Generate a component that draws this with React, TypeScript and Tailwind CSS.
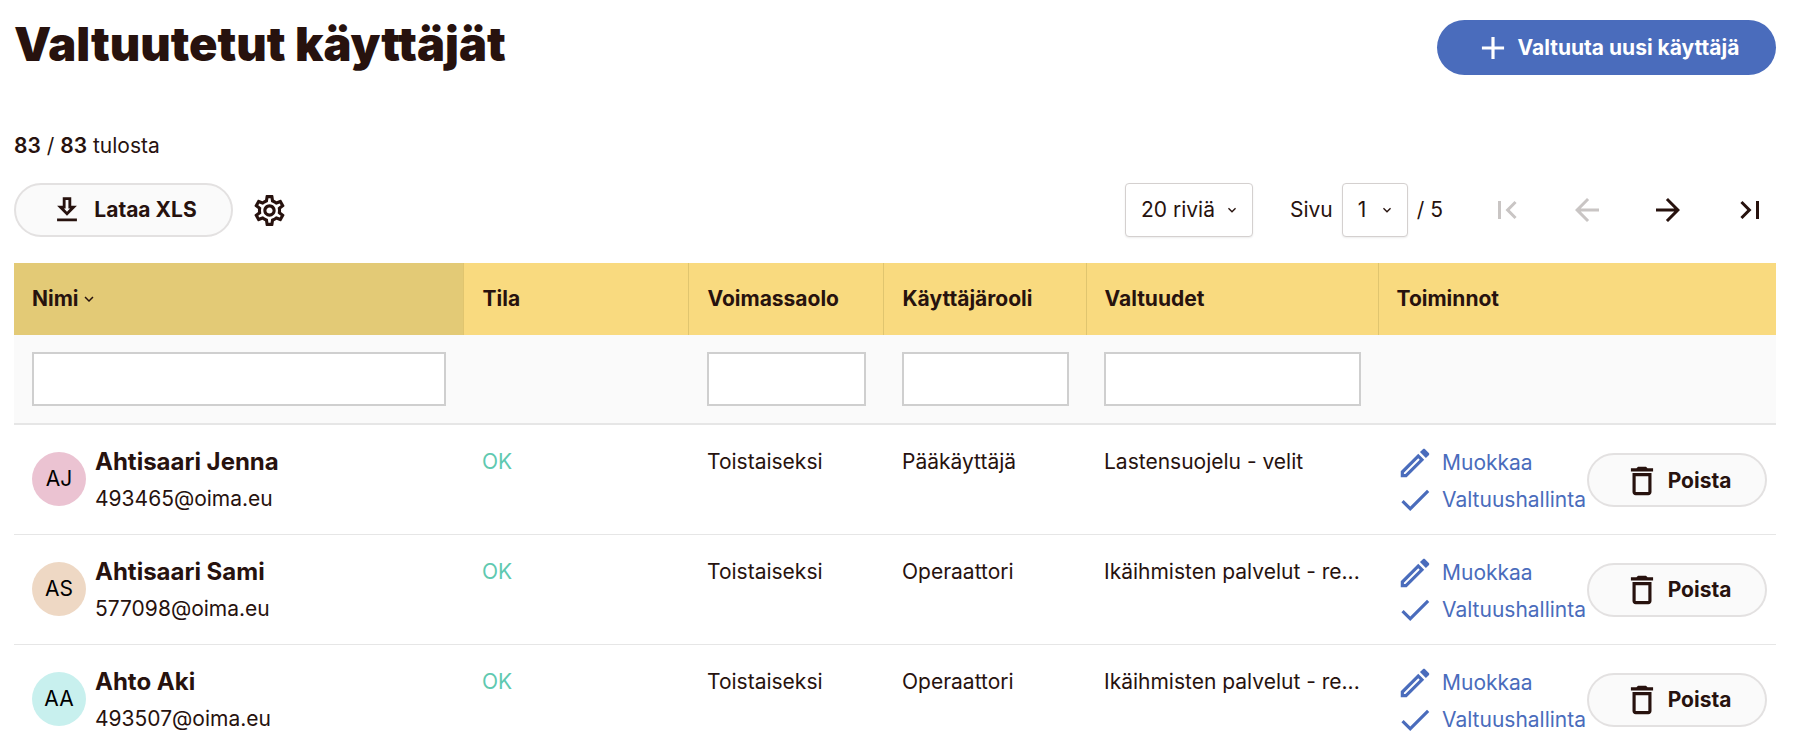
// App.tsx
import React from 'react';

const paths = {
  add: 'M19 13h-6v6h-2v-6H5v-2h6V5h2v6h6v2z',
  download: 'M19 9h-4V3H9v6H5l7 7 7-7zm-8 2V5h2v6h1.17L12 13.17 9.83 11H11zm-6 7h14v2H5z',
  settings:
    'M19.43 12.98c.04-.32.07-.64.07-.98 0-.34-.03-.66-.07-.98l2.11-1.65c.19-.15.24-.42.12-.64l-2-3.46c-.09-.16-.26-.25-.44-.25-.06 0-.12.01-.17.03l-2.49 1c-.52-.4-1.08-.73-1.69-.98l-.38-2.65C14.46 2.18 14.25 2 14 2h-4c-.25 0-.46.18-.49.42l-.38 2.65c-.61.25-1.17.59-1.69.98l-2.49-1c-.06-.02-.12-.03-.18-.03-.17 0-.34.09-.43.25l-2 3.46c-.13.22-.07.49.12.64l2.11 1.65c-.04.32-.07.65-.07.98 0 .33.03.66.07.98l-2.11 1.65c-.19.15-.24.42-.12.64l2 3.46c.09.16.26.25.44.25.06 0 .12-.01.17-.03l2.49-1c.52.4 1.08.73 1.69.98l.38 2.65c.03.24.24.42.49.42h4c.25 0 .46-.18.49-.42l.38-2.65c.61-.25 1.17-.59 1.69-.98l2.49 1c.06.02.12.03.18.03.17 0 .34-.09.43-.25l2-3.46c.12-.22.07-.49-.12-.64l-2.11-1.65zm-1.98-1.71c.04.31.05.52.05.73 0 .21-.02.43-.05.73l-.14 1.13.89.7 1.08.84-.7 1.21-1.27-.51-1.04-.42-.9.68c-.43.32-.84.56-1.25.73l-1.06.43-.16 1.13-.2 1.35h-1.4l-.19-1.35-.16-1.13-1.06-.43c-.43-.18-.83-.41-1.23-.71l-.91-.7-1.06.43-1.27.51-.7-1.21 1.08-.84.89-.7-.14-1.13c-.03-.31-.05-.54-.05-.74s.02-.43.05-.73l.14-1.13-.89-.7-1.08-.84.7-1.21 1.27.51 1.04.42.9-.68c.43-.32.84-.56 1.25-.73l1.06-.43.16-1.13.2-1.35h1.39l.19 1.35.16 1.13 1.06.43c.43.18.83.41 1.23.71l.91.7 1.06-.43 1.27-.51.7 1.21-1.07.85-.89.7.14 1.13zM12 8c-2.21 0-4 1.79-4 4s1.79 4 4 4 4-1.79 4-4-1.79-4-4-4zm0 6c-1.1 0-2-.9-2-2s.9-2 2-2 2 .9 2 2-.9 2-2 2z',
  first: 'M18.41 16.59L13.82 12l4.59-4.59L17 6l-6 6 6 6zM6 6h2v12H6z',
  back: 'M20 11H7.83l5.59-5.59L12 4l-8 8 8 8 1.41-1.41L7.83 13H20v-2z',
  forward: 'M12 4l-1.41 1.41L16.17 11H4v2h12.17l-5.58 5.59L12 20l8-8z',
  last: 'M5.59 7.41L10.18 12l-4.59 4.59L7 18l6-6-6-6zM16 6h2v12h-2z',
  edit: 'M3 17.25V21h3.75L17.81 9.94l-3.75-3.75L3 17.25zM5.92 19H5v-.92l9.06-9.06.92.92L5.92 19zM20.71 7.04c.39-.39.39-1.02 0-1.41l-2.34-2.34c-.2-.2-.45-.29-.71-.29s-.51.08-.7.29l-1.83 1.83 3.75 3.75 1.83-1.83z',
  check: 'M9 16.17 4.83 12l-1.42 1.41L9 19 21 7l-1.41-1.41z',
  trash: 'M16 9v10H8V9h8m-1.5-6h-5l-1 1H5v2h14V4h-3.5l-1-1zM18 7H6v12c0 1.1.9 2 2 2h8c1.1 0 2-.9 2-2V7z',
  chevron: 'M7.41 8.59 12 13.17l4.59-4.58L18 10l-6 6-6-6z',
};

const Icon = ({ d, className }: { d: string; className: string }) => (
  <svg viewBox="0 0 24 24" fill="currentColor" className={className}>
    <path d={d} />
  </svg>
);

const users = [
  { initials: 'AJ', color: 'bg-[#ebc3d2]', name: 'Ahtisaari Jenna', email: '493465@oima.eu', role: 'Pääkäyttäjä', rights: 'Lastensuojelu - velit' },
  { initials: 'AS', color: 'bg-[#eed8c4]', name: 'Ahtisaari Sami', email: '577098@oima.eu', role: 'Operaattori', rights: 'Ikäihmisten palvelut - re...' },
  { initials: 'AA', color: 'bg-[#c8f0ee]', name: 'Ahto Aki', email: '493507@oima.eu', role: 'Operaattori', rights: 'Ikäihmisten palvelut - re...' },
];

const headCell = 'border-l border-[#e0c56f] pl-[19px] pr-[17px] text-left font-bold';
const headCellTight = 'border-l border-[#e0c56f] pl-[18px] pr-[17px] text-left font-bold';
const filterInput = 'block h-[54px] w-full border-2 border-[#cfcfcf] bg-white';

const PageSelect = ({ label, className }: { label: string; className: string }) => (
  <div className={`flex h-[54px] items-center justify-between rounded border border-[#d4d0cf] bg-white pl-[15px] pr-3 shadow-[0_1px_2px_rgba(0,0,0,0.08)] ${className}`}>
    <span>{label}</span>
    <Icon d={paths.chevron} className="h-4 w-4" />
  </div>
);

const UserRow = ({ user }: { user: (typeof users)[number] }) => (
  <tr className="h-[110px] border-b border-[#e6e6e6] align-top">
    <td className="pl-[18px] pt-[22px]">
      <div className="flex items-start gap-[9px]">
        <div className={`mt-[5px] flex h-[54px] w-[54px] shrink-0 items-center justify-center rounded-full text-black ${user.color}`}>{user.initials}</div>
        <div>
          <div className="text-[24px] font-bold leading-[30px]">{user.name}</div>
          <div className="mt-[8px] leading-[28px]">{user.email}</div>
        </div>
      </div>
    </td>
    <td className="pl-[19px] pt-[21px] text-[#5fc9b0]">OK</td>
    <td className="pl-[19px] pt-[21px]">Toistaiseksi</td>
    <td className="pl-[19px] pt-[21px]">{user.role}</td>
    <td className="pl-[18px] pt-[21px]">{user.rights}</td>
    <td className="pl-[19px] pt-[24px]">
      <div className="flex items-start">
        <div className="flex w-[190px] shrink-0 flex-col gap-[9px] text-[#4a6cbc]">
          <div className="-ml-[1px] flex h-[28px] items-center gap-[8px]">
            <Icon d={paths.edit} className="h-[38px] w-[38px] shrink-0" />
            <span>Muokkaa</span>
          </div>
          <div className="-ml-[1px] flex h-[28px] items-center gap-[8px]">
            <Icon d={paths.check} className="h-[38px] w-[38px] shrink-0" />
            <span>Valtuushallinta</span>
          </div>
        </div>
        <button className="mt-[4px] flex h-[54px] w-[180px] shrink-0 items-center justify-center gap-[7px] rounded-full border-2 border-[#e3e1e1] bg-[#fafafa] pt-[1px] font-bold">
          <Icon d={paths.trash} className="h-[38px] w-[38px]" />
          Poista
        </button>
      </div>
    </td>
  </tr>
);

export default function App() {
  return (
    <div className="h-[746px] overflow-hidden bg-white pl-[14px] pr-[30px] font-['Inter',sans-serif] text-[21px] text-[#27120e]">
      <div className="flex items-start justify-between pt-5">
        <h1 className="text-[47px] font-black leading-[48px]">Valtuutetut käyttäjät</h1>
        <button className="flex h-[55px] w-[339px] items-center justify-center gap-[6px] rounded-full bg-[#4a6cbc] font-bold text-white">
          <Icon d={paths.add} className="h-[38px] w-[38px]" />
          Valtuuta uusi käyttäjä
        </button>
      </div>

      <div className="mt-[59px] leading-[24px]">
        <b className="font-semibold">83</b> / <b className="font-semibold">83</b> tulosta
      </div>

      <div className="mt-[25px] flex h-[54px] items-center justify-between">
        <div className="flex items-center gap-[18px]">
          <button className="flex h-[54px] w-[219px] items-center justify-center gap-[10px] rounded-full border-2 border-[#e3e1e1] bg-[#fafafa] font-bold">
            <Icon d={paths.download} className="h-[34px] w-[34px]" />
            Lataa XLS
          </button>
          <Icon d={paths.settings} className="h-[37px] w-[37px]" />
        </div>
        <div className="flex items-center">
          <PageSelect label="20 riviä" className="w-[128px]" />
          <span className="ml-[37px]">Sivu</span>
          <PageSelect label="1" className="ml-[9px] w-[66px]" />
          <span className="ml-[9px]">/ 5</span>
          <div className="ml-[46px] flex items-center pr-[8px]">
            <Icon d={paths.first} className="h-[36px] w-[36px] text-[#c9c5c4]" />
            <Icon d={paths.back} className="ml-[44px] h-[36px] w-[36px] text-[#c9c5c4]" />
            <Icon d={paths.forward} className="ml-[45px] h-[36px] w-[36px]" />
            <Icon d={paths.last} className="ml-[46px] h-[36px] w-[36px]" />
          </div>
        </div>
      </div>

      <table className="mt-[26px] w-full table-fixed border-collapse">
        <colgroup>
          <col className="w-[449px]" />
          <col className="w-[225px]" />
          <col className="w-[195px]" />
          <col className="w-[203px]" />
          <col className="w-[292px]" />
          <col className="w-[398px]" />
        </colgroup>
        <thead>
          <tr className="h-[72px] bg-[#f9da7f]">
            <th className="bg-[#e3ca76] px-[18px] text-left font-bold">
              <span className="flex items-center gap-[1px]">
                Nimi
                <Icon d={paths.chevron} className="h-[18px] w-[18px]" />
              </span>
            </th>
            <th className={headCell}>Tila</th>
            <th className={headCell}>Voimassaolo</th>
            <th className={headCell}>Käyttäjärooli</th>
            <th className={headCellTight}>Valtuudet</th>
            <th className={headCellTight}>Toiminnot</th>
          </tr>
        </thead>
        <tbody>
          <tr className="h-[89px] border-b-2 border-[#e6e6e6] bg-[#fafafa]">
            <td className="pl-[18px] pr-[17px]"><input className={filterInput} /></td>
            <td />
            <td className="pl-[19px] pr-[17px]"><input className={filterInput} /></td>
            <td className="pl-[19px] pr-[17px]"><input className={filterInput} /></td>
            <td className="pl-[18px] pr-[17px]"><input className={filterInput} /></td>
            <td />
          </tr>
          {users.map((user) => (
            <UserRow key={user.email} user={user} />
          ))}
        </tbody>
      </table>
    </div>
  );
}
